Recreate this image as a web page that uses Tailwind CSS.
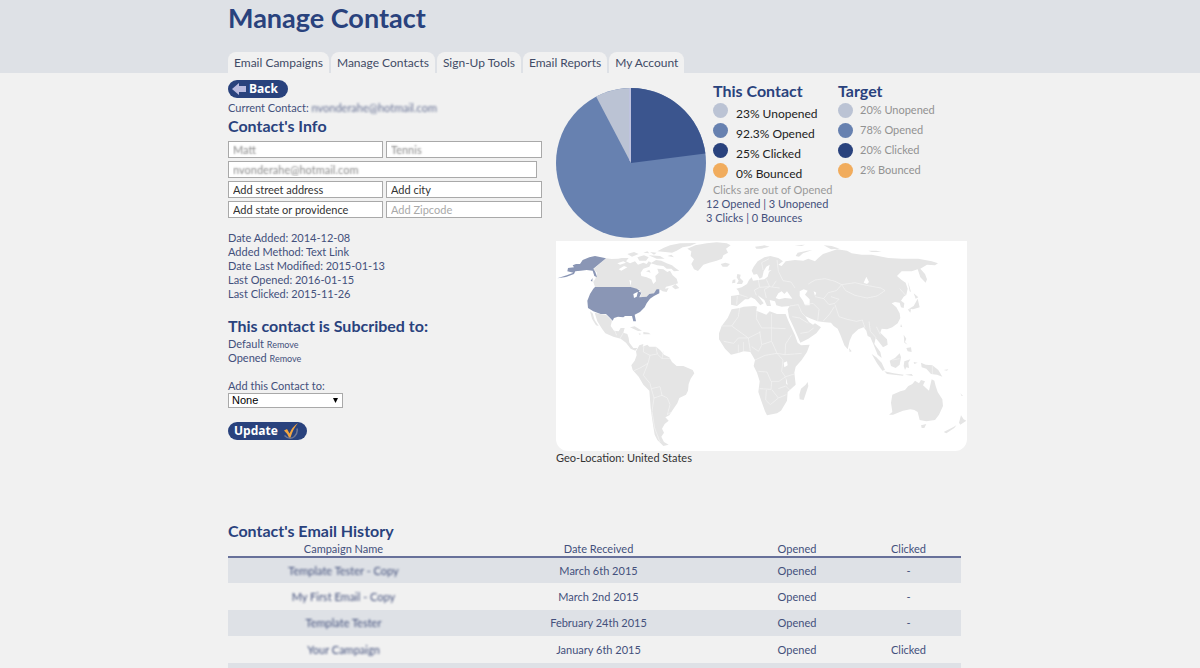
<!DOCTYPE html>
<html lang="en">
<head>
    <meta charset="UTF-8">
    <meta name="viewport" content="width=device-width, initial-scale=1.0">
    <title>Manage Contact</title>
    <script src="https://cdn.jsdelivr.net/npm/@tailwindcss/browser@4"></script>
</head>
<body class="bg-[#f1f1f1] font-['Lato',sans-serif] text-[11px] leading-[14px] text-[#43507c]">
    <header class="bg-[#dee1e6]">
        <div class="max-w-[744px] mx-auto">
            <h1 class="pt-0.5 pb-[18px] text-[27px] leading-8 font-bold text-[#29427d]">Manage Contact</h1>
            <nav class="flex gap-0.5 text-xs text-[#414b66]">
                <a href="#" class="bg-[#f1f1f1] rounded-t-lg px-1.5 h-[21px] leading-[22px]">Email Campaigns</a>
                <a href="#" class="bg-[#f1f1f1] rounded-t-lg px-1.5 h-[21px] leading-[22px]">Manage Contacts</a>
                <a href="#" class="bg-[#f1f1f1] rounded-t-lg px-1.5 h-[21px] leading-[22px]">Sign-Up Tools</a>
                <a href="#" class="bg-[#f1f1f1] rounded-t-lg px-1.5 h-[21px] leading-[22px]">Email Reports</a>
                <a href="#" class="bg-[#f1f1f1] rounded-t-lg px-1.5 h-[21px] leading-[22px]">My Account</a>
            </nav>
        </div>
    </header>

    <main class="max-w-[744px] mx-auto">
        <div class="flex">
            <!-- contact form -->
            <form class="w-[328px] shrink-0 pt-[7px]">
                <button type="button" class="flex items-center gap-[3px] h-[18px] w-[60px] pl-1 rounded-full bg-[#29427d] text-white font-['Open_Sans',sans-serif] font-bold text-xs leading-[18px]">
                    <svg class="w-3.5 h-3" viewBox="0 0 14 12"><path fill="#b9badf" d="M0 6 7 0v3h7v6H7v3z"/></svg>
                    Back
                </button>
                <p class="mt-[3px]">Current Contact: <span class="blur-[1px] opacity-80">nvonderahe@hotmail.com</span></p>
                <h2 class="mt-px text-base leading-5 font-bold text-[#29427d]">Contact's Info</h2>
                <div class="mt-[5px] grid grid-cols-[155px_156px] gap-x-[3px] gap-y-[3px] text-[#333]">
                    <input type="text" aria-label="First name" value="Matt" class="h-[17px] px-1 bg-white border border-[#a9a9a9] text-transparent text-shadow-[0_0_2px_#888]">
                    <input type="text" aria-label="Last name" value="Tennis" class="h-[17px] px-1 bg-white border border-[#a9a9a9] text-transparent text-shadow-[0_0_2px_#888]">
                    <input type="email" aria-label="Email" value="nvonderahe@hotmail.com" class="col-span-2 mr-[5px] h-[17px] px-1 bg-white border border-[#a9a9a9] text-transparent text-shadow-[0_0_2px_#888]">
                    <input type="text" aria-label="Street address" value="Add street address" class="h-[17px] px-1 bg-white border border-[#a9a9a9]">
                    <input type="text" aria-label="City" value="Add city" class="h-[17px] px-1 bg-white border border-[#a9a9a9]">
                    <input type="text" aria-label="State" value="Add state or providence" class="h-[17px] px-1 bg-white border border-[#a9a9a9]">
                    <input type="text" aria-label="Zipcode" placeholder="Add Zipcode" class="h-[17px] px-1 bg-white border border-[#a9a9a9] placeholder:text-[#a9a9a9]">
                </div>
                <div class="mt-[13px]">
                    <p>Date Added: 2014-12-08</p>
                    <p>Added Method: Text Link</p>
                    <p>Date Last Modified: 2015-01-13</p>
                    <p>Last Opened: 2016-01-15</p>
                    <p>Last Clicked: 2015-11-26</p>
                </div>
                <h2 class="mt-[15px] mb-px text-base leading-5 font-bold text-[#29427d]">This contact is Subcribed to:</h2>
                <p>Default <a href="#" class="text-[9px] leading-none">Remove</a></p>
                <p>Opened <a href="#" class="text-[9px] leading-none">Remove</a></p>
                <label for="list" class="block mt-3.5">Add this Contact to:</label>
                <div class="relative w-[115px]">
                    <select id="list" class="block w-full h-[15px] px-[3px] appearance-none bg-white border border-[#a9a9a9] text-black font-['Liberation_Sans',sans-serif] text-[11px] leading-[13px]">
                        <option>None</option>
                    </select>
                    <svg class="absolute right-1 top-[5px] w-[7px] h-[5px] pointer-events-none" viewBox="0 0 7 5"><path d="M1 0h5L3.500 5z"/></svg>
                </div>
                <button type="submit" class="mt-3.5 flex items-center gap-[5px] h-[18px] w-[79px] pl-1.5 rounded-full bg-[#29427d] text-white font-['Open_Sans',sans-serif] font-bold text-xs leading-[18px]">
                    Update
                    <svg class="w-4 h-[18px]" viewBox="0 0 16 18" fill="none"><path stroke="#6f7794" stroke-width="1.500" d="M1.500 13.500q5 5 10 1 3.500-3.500 2.500-8"/><path fill="#f2a541" d="M1 8.500 4 7l2.500 4.500Q9 5 15 1 10 7 7.500 15.500H6Q4 11 1 8.500z"/></svg>
                </button>
            </form>

            <!-- stats and map -->
            <section class="grow">
                <div class="flex pt-2">
                    <svg class="mt-[7px] w-[150px] h-[150px] shrink-0" viewBox="-75 -75 150 150">
                        <circle r="75" fill="#6781b0"/>
                        <path fill="#3b558e" d="M0 0V-75A75 75 0 0 1 74.400-9.400z"/>
                        <path fill="#bbc3d4" d="M0 0-34.900-66.400A75 75 0 0 1 0-75z"/>
                        <path stroke="#c3c3ea" stroke-width="1" d="M-1-75V-2"/>
                    </svg>
                    <div class="w-[126px]">
                        <h2 class="pl-[7px] text-base leading-5 font-bold text-[#29427d]">This Contact</h2>
                        <ul class="mt-0.5 pl-[7px] text-xs text-[#222]">
                            <li class="flex gap-2 h-5"><span class="size-[15px] rounded-full bg-[#bbc3d4]"></span><span class="pt-[3px]">23% Unopened</span></li>
                            <li class="flex gap-2 h-5"><span class="size-[15px] rounded-full bg-[#6781b0]"></span><span class="pt-[3px]">92.3% Opened</span></li>
                            <li class="flex gap-2 h-5"><span class="size-[15px] rounded-full bg-[#29427d]"></span><span class="pt-[3px]">25% Clicked</span></li>
                            <li class="flex gap-2 h-5"><span class="size-[15px] rounded-full bg-[#f1ac5d]"></span><span class="pt-[3px]">0% Bounced</span></li>
                        </ul>
                        <p class="pl-[7px] whitespace-nowrap text-[#999]">Clicks are out of Opened</p>
                        <p>12 Opened | 3 Unopened</p>
                        <p>3 Clicks | 0 Bounces</p>
                    </div>
                    <div class="pl-1.5">
                        <h2 class="text-base leading-5 font-bold text-[#29427d]">Target</h2>
                        <ul class="mt-0.5 text-[#929292]">
                            <li class="flex gap-[7px] h-5"><span class="size-[15px] rounded-full bg-[#bbc3d4]"></span>20% Unopened</li>
                            <li class="flex gap-[7px] h-5"><span class="size-[15px] rounded-full bg-[#6781b0]"></span>78% Opened</li>
                            <li class="flex gap-[7px] h-5"><span class="size-[15px] rounded-full bg-[#29427d]"></span>20% Clicked</li>
                            <li class="flex gap-[7px] h-5"><span class="size-[15px] rounded-full bg-[#f1ac5d]"></span>2% Bounced</li>
                        </ul>
                    </div>
                </div>
                <div class="mt-[3px] mr-[5px] bg-white rounded-b-xl overflow-hidden">
                    <svg class="block w-full" viewBox="18 9 1233 630" fill="#e5e5e5">
                        <!-- Canada -->
                        <path d="M168 61 185 63 205 62 215 60 236 60 228 70 240 76 255 70 264 80 280 74 290 78 296 70 304 74 298 86 280 92 272 104 274 114 290 118 304 124 310 138 318 130 316 114 326 104 322 92 340 94 352 102 360 98 368 112 380 122 384 136 366 142 348 146 345 152 356 150 350 162 338 160 328 154 312 166 290 176 270 178 275 165 262 156 242 147 135 147 130 132 136 122 141 104 130 94z"/>
                        <path d="M302 76 318 66 334 68 350 76 366 82 376 90 388 98 372 100 364 92 350 92 340 84 322 82zM322 40 340 30 360 22 390 16 440 15 420 24 398 28 380 38 366 44 346 42zM262 58 282 52 296 58 288 68 268 68zM232 48 252 42 266 48 246 56zM296 52 330 54 344 62 320 62zM300 42 320 44 312 50zM280 44 292 40 298 46zM352 54 364 50 372 58zM366 146 376 138 388 150 376 154zM288 100 298 96 302 104zM128 122 124 132 130 130zM136 134 148 144 140 142z"/>
                        <path fill="#fff" d="M202 76 220 70 228 74 210 80zM206 94 222 84 232 88 214 98zM238 126 244 128 242 144zM254 152 272 156 268 164z"/>
                        <!-- Greenland, Iceland, Britain -->
                        <path d="M424 40 412 32 436 22 470 16 500 13 530 16 542 22 528 32 534 44 520 52 516 62 500 68 478 74 460 80 452 90 444 99 432 94 424 78 432 64 422 54zM512 78 526 74 540 78 532 86 518 86zM562 108 572 110 570 120 580 130 576 138 560 138 566 128 560 118zM548 126 556 124 556 134 546 136z"/>
                        <!-- Central and South America -->
                        <path d="M134 224 150 228 168 230 178 240 186 248 182 264 192 278 206 280 212 270 224 270 220 284 232 288 236 300 238 314 250 330 262 330 256 338 242 332 228 314 212 302 190 296 166 286 156 272 142 250zM120 220 128 226 134 246 146 264 138 262 126 242zM240 268 254 265 276 278 264 279zM280 282 296 284 302 289 280 289zM266 286 274 288 268 290z"/>
                        <path d="M258 340 268 322 280 318 278 326 292 320 298 326 318 326 330 336 342 350 358 358 366 372 380 384 400 384 428 396 433 406 422 422 416 438 414 458 408 470 388 480 382 496 368 516 358 532 346 538 356 548 344 558 336 572 342 584 334 596 342 612 356 620 340 624 322 606 314 590 310 566 306 540 302 510 298 458 280 440 266 416 248 396 244 382 254 368 260 352z"/>
                        <g transform="translate(615)">
                            <!-- Eurasia -->
                            <path d="M-72 174-46 170-50 158-56 152-40 148-24 138-18 126-10 118-6 128 10 126 28 124 38 116 42 102 50 96 40 98 44 80 34 86 26 100 22 118 14 122 6 108-4 110-10 98-4 86 8 70 28 58 46 54 70 60 84 70 70 80 80 84 92 70 120 66 145 68 160 62 180 70 190 60 204 48 222 42 246 34 276 38 290 46 320 50 350 50 400 60 440 62 490 62 530 70 549 76 540 82 516 80 496 92 510 108 516 124 512 134 496 118 488 94 470 100 440 100 426 114 440 126 452 134 458 152 454 170 446 176 438 188 448 196 446 210 438 208 434 194 420 192 410 196 424 208 434 226 436 240 428 256 412 268 396 274 380 272 376 284 396 304 398 320 384 328 372 312 362 300 358 318 376 342 380 360 368 350 354 316 346 298 338 294 334 278 326 268 310 274 292 290 284 308 278 334 268 322 256 290 248 272 236 264 228 254 204 252 188 250 168 242 150 234 162 252 174 260 180 256 198 268 184 286 160 302 136 314 130 300 116 268 102 238 98 214 104 204 80 206 64 202 60 190 44 186 48 204 36 204 28 186 8 172 26 196 16 202 0 184-12 178-20 184-30 184-44 196-54 204-72 200z"/>
                            <path fill="#fff" d="M62 180 70 166 80 160 88 168 96 160 106 174 112 182 90 180 72 184zM134 160 146 154 158 158 150 170 164 184 164 202 150 202 144 188 134 174zM176 160 184 164 180 174zM326 134 334 116 342 132 336 138z"/>
                            <!-- Africa and Madagascar -->
                            <path d="M-46 210-34 206-2 204 6 206 4 218 34 230 44 220 66 228 92 228 98 244 108 266 120 292 128 314 138 322 164 320 156 342 140 366 122 386 118 404 122 440 98 462 96 488 78 518 66 526 36 532 30 520 20 492 10 462 14 430 6 404-4 384 0 366-14 342-34 340-48 344-72 350-90 332-108 304-108 286-100 264-82 240-70 214zM134 484 133 470 138 452 152 440 158 432 160 444 146 486z"/>
                            <path fill="#fff" d="M86 374 96 370 98 382 88 388zM92 416 98 440 94 438z"/>
                            <!-- islands of Asia -->
                            <path d="M350 348 364 358 380 374 390 396 382 398 366 376zM388 400 416 406 446 410 444 413 396 408zM404 368 420 360 434 346 438 358 434 380 422 390 408 384zM448 370 466 364 460 374 462 390 454 388 450 396 446 384zM446 290 454 302 450 312 458 320 448 314zM454 330 468 328 470 342 458 340zM498 374 512 380 532 382 550 396 562 416 546 410 528 408 514 392 500 388zM282 330 290 340 284 342zM438 258 442 268 436 266zM458 130 464 148 468 162 464 160zM476 166 490 178 482 182zM488 182 494 208 474 214 462 212 476 204zM458 214 468 214 466 224zM450 410 470 408 474 414zM476 372 488 374 478 378zM566 396 580 394 576 398z"/>
                            <!-- Australia and New Zealand -->
                            <path d="M412 470 436 460 450 456 460 444 472 438 480 428 492 436 498 426 510 430 504 442 522 458 530 424 538 428 542 444 548 462 562 484 564 504 552 530 540 546 514 550 494 546 488 522 478 516 466 514 444 518 414 530 402 530 412 522 408 494zM498 562 514 558 508 570 500 570zM566 582 594 568 604 562 598 570 574 586zM618 532 626 544 634 548 616 560 612 554zM616 466 624 474 620 474z"/>
                            <!-- northern islands -->
                            <path d="M122 54 128 44 156 38 172 36 144 46 132 56zM0 26 28 22 44 26 20 32 4 32zM206 22 230 24 254 32 228 34zM340 38 364 38 380 42 350 42zM118 22 150 20 140 24z"/>
                            <!-- borders -->
                            <path fill="none" stroke="#f4f4f4" stroke-width="2" d="M260 140 300 134 334 142 378 150 390 158 366 174 336 180 300 172 272 158zM160 138 180 126 210 122 240 130 260 140 244 158 220 164 206 182 180 176M120 150 108 132 84 128 70 100 66 66M206 182 222 200 240 196 252 184 228 176M240 200 252 236 276 244 304 250 322 246 330 270M188 250 192 214 174 196 150 200M204 250 224 228 238 206M104 204 130 200 140 224 150 234M112 236 134 240 160 256M136 286 160 282 176 270M342 250 346 280 364 300M364 266 376 290M10 126 14 148-2 156 4 172M34 124 44 146 28 154 34 180M14 148 44 146 74 150M-46 170-22 178M64 128 52 146M24 96 20 74 42 62M434 152 452 172"/>
                            <path fill="none" stroke="#f4f4f4" stroke-width="2" d="M6 218 4 242 20 270 50 270 92 272M50 228 50 310 20 320 14 280M-100 264-70 264-50 236-46 210M-70 264-20 300 16 282M-94 310-64 316-50 300-20 300-14 340M-50 320-50 344M-34 340-34 312M-10 326 10 340 20 322M50 310 66 346 90 350 92 318 110 290M90 350 118 348 140 346M0 366 30 352 66 346M66 346 84 366 80 400 92 418M10 400 36 402 48 430 72 430 92 416 118 408M14 452 48 454 50 430M34 456 32 486 46 500 70 480 94 470M70 452 92 444 104 456M50 454 70 480M532 382 532 408M412 366 434 362"/>
                        </g>
                        <path fill="none" stroke="#f4f4f4" stroke-width="2" d="M282 320 280 342 300 352 294 376 270 390 252 398M300 352 322 348 336 362 360 362M318 328 322 348M340 340 336 362M294 376 280 412 300 436 304 452 330 446 336 472 352 480 360 500 352 530M304 452 312 480 306 520 314 570 330 612M312 480 336 472M352 530 364 522M194 278 200 292M220 284 210 302M562 174 560 200"/>
                        <!-- United States -->
                        <path fill="#8a96b5" d="M135 147 242 147 260 152 270 158 250 168 252 180 260 176 264 160 274 164 268 178 290 176 298 168 312 166 320 154 328 154 328 166 312 174 300 182 290 196 284 208 270 222 254 230 258 250 250 250 246 234 225 234 220 238 204 236 192 240 188 248 178 238 168 228 152 228 130 220 114 210 112 188 120 168 130 152zM22 121 50 112 70 104 52 100 54 90 72 88 68 82 78 78 90 78 98 66 118 58 135 54 168 61 130 92 136 102 141 118 133 114 128 98 110 96 92 98 76 100 72 108 48 117zM122 128 128 120 126 130z"/>
                    </svg>
                </div>
                <p class="text-[#333]">Geo-Location: United States</p>
            </section>
        </div>

        <section class="pt-14 mr-[11px]">
            <h2 class="text-base leading-5 font-bold text-[#29427d]">Contact's Email History</h2>
            <table class="w-full table-fixed border-collapse text-center">
                <colgroup>
                    <col class="w-[231px]">
                    <col>
                    <col class="w-[118px]">
                    <col class="w-[105px]">
                </colgroup>
                <thead>
                    <tr class="h-4 border-b-2 border-[#68719a]">
                        <th class="p-0 font-normal">Campaign Name</th>
                        <th class="p-0 font-normal">Date Received</th>
                        <th class="p-0 font-normal">Opened</th>
                        <th class="p-0 font-normal">Clicked</th>
                    </tr>
                </thead>
                <tbody>
                    <tr class="h-[26px] bg-[#dee1e6]">
                        <td class="p-0"><span class="blur-[1px]">Template Tester - Copy</span></td>
                        <td class="p-0">March 6th 2015</td>
                        <td class="p-0">Opened</td>
                        <td class="p-0">-</td>
                    </tr>
                    <tr class="h-[27px]">
                        <td class="p-0"><span class="blur-[1px]">My First Email - Copy</span></td>
                        <td class="p-0">March 2nd 2015</td>
                        <td class="p-0">Opened</td>
                        <td class="p-0">-</td>
                    </tr>
                    <tr class="h-[26px] bg-[#dee1e6]">
                        <td class="p-0"><span class="blur-[1px]">Template Tester</span></td>
                        <td class="p-0">February 24th 2015</td>
                        <td class="p-0">Opened</td>
                        <td class="p-0">-</td>
                    </tr>
                    <tr class="h-[27px]">
                        <td class="p-0"><span class="blur-[1px]">Your Campaign</span></td>
                        <td class="p-0">January 6th 2015</td>
                        <td class="p-0">Opened</td>
                        <td class="p-0">Clicked</td>
                    </tr>
                    <tr class="h-[26px] bg-[#dee1e6]">
                        <td class="p-0" colspan="4"></td>
                    </tr>
                </tbody>
            </table>
        </section>
    </main>
</body>
</html>
